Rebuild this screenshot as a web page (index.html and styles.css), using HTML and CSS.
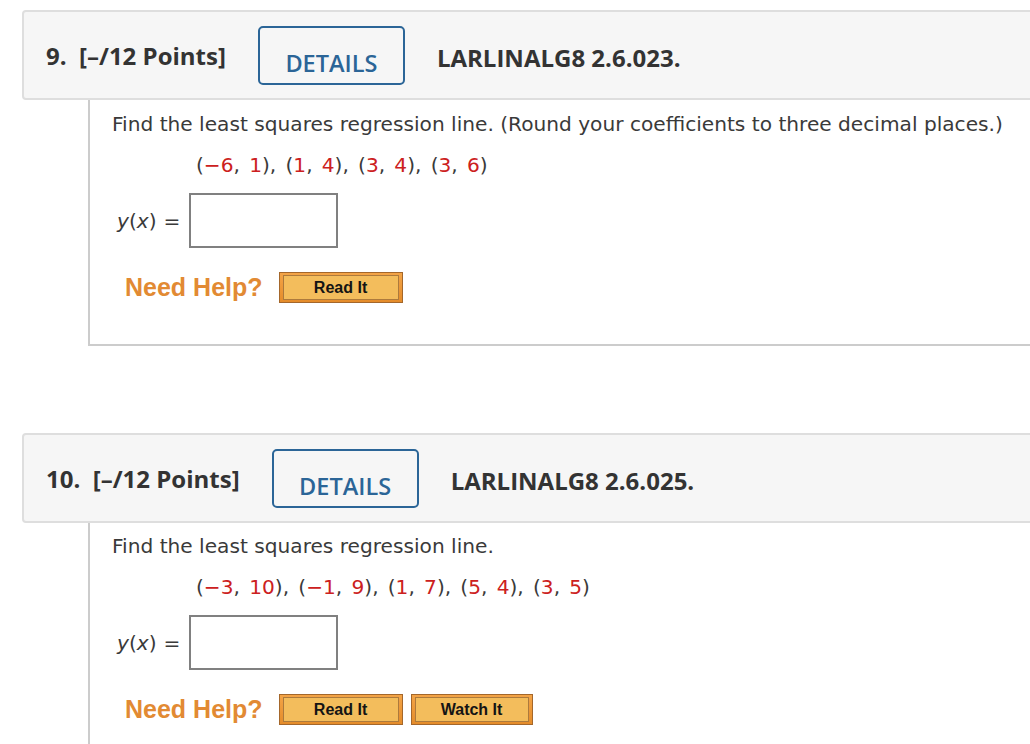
FILE: index.html
```html
<!DOCTYPE html>
<html lang="en">
<head>
<meta charset="utf-8">
<title>Questions</title>
<link rel="stylesheet" href="styles.css">
</head>
<body>
<div class="page">
  <section class="question q9">
    <header class="qhead">
      <span class="qnum">9.&nbsp; [–/12 Points]</span>
      <span class="details"><span>DETAILS</span></span>
      <span class="ref">LARLINALG8 2.6.023.</span>
    </header>
    <div class="qbody">
      <p class="prompt">Find the least squares regression line. (Round your coefficients to three decimal places.)</p>
      <p class="points">(<b>−6</b>, <b>1</b>), (<b>1</b>, <b>4</b>), (<b>3</b>, <b>4</b>), (<b>3</b>, <b>6</b>)</p>
      <div class="answer"><span class="lhs"><i>y</i>(<i>x</i>)</span><span class="eq">=</span><span class="input"></span></div>
      <div class="help">
        <span class="need">Need Help?</span>
        <span class="btn"><span class="btn-in read">Read It</span></span>
      </div>
    </div>
  </section>
  <section class="question q10">
    <header class="qhead">
      <span class="qnum">10.&nbsp; [–/12 Points]</span>
      <span class="details"><span>DETAILS</span></span>
      <span class="ref">LARLINALG8 2.6.025.</span>
    </header>
    <div class="qbody">
      <p class="prompt">Find the least squares regression line.</p>
      <p class="points">(<b>−3</b>, <b>10</b>), (<b>−1</b>, <b>9</b>), (<b>1</b>, <b>7</b>), (<b>5</b>, <b>4</b>), (<b>3</b>, <b>5</b>)</p>
      <div class="answer"><span class="lhs"><i>y</i>(<i>x</i>)</span><span class="eq">=</span><span class="input"></span></div>
      <div class="help">
        <span class="need">Need Help?</span>
        <span class="btn"><span class="btn-in read">Read It</span></span>
        <span class="btn"><span class="btn-in watch">Watch It</span></span>
      </div>
    </div>
  </section>
</div>
</body>
</html>
```
FILE: styles.css
```css
html, body {
  margin: 0;
  padding: 0;
  background: #fff;
}
.page {
  width: 1030px;
  height: 744px;
  overflow: hidden;
  padding: 10px 0 0 22px;
  box-sizing: border-box;
}
.question {
  margin-right: -20px;
}
.q9 {
  margin-bottom: 87px;
}
.qhead {
  display: flex;
  align-items: center;
  gap: 32px;
  height: 90px;
  box-sizing: border-box;
  border: 2px solid #dedede;
  border-radius: 4px;
  background: #f6f6f6;
  padding-left: 22px;
  font-family: "Open Sans", sans-serif;
  font-weight: 700;
  font-size: 24px;
  color: #333;
}
.qnum {
  white-space: pre;
}
.ref {
  padding-top: 4px;
}
.details {
  display: flex;
  align-items: center;
  justify-content: center;
  width: 147px;
  height: 59px;
  box-sizing: border-box;
  border: 2px solid #2b6597;
  border-radius: 5px;
  color: #2b6597;
  font-weight: 600;
  font-size: 23.5px;
  padding-top: 16px;
}
.qbody {
  margin-left: 66px;
  border-left: 2px solid #cccccc;
  border-bottom: 2px solid #cccccc;
  padding: 12px 0 41px 22px;
  font-family: "DejaVu Sans", Verdana, sans-serif;
  font-size: 20.15px;
  color: #3a3a3a;
}
.q10 .qbody {
  padding-top: 11px;
}
.prompt {
  margin: 0;
  line-height: 24px;
}
.points {
  margin: 17px 0 0 84px;
  line-height: 24px;
  word-spacing: 2.8px;
}
.points b {
  font-weight: normal;
  color: #cc2020;
}
.answer {
  display: flex;
  align-items: center;
  margin-top: 16px;
  padding-left: 5px;
}
.lhs i {
  font-style: oblique;
}
.eq {
  margin-left: 7px;
  margin-right: 9px;
}
.input {
  width: 149px;
  height: 55px;
  box-sizing: border-box;
  border: 2px solid #808080;
  background: #fff;
}
.help {
  display: flex;
  align-items: center;
  margin-top: 24px;
  padding-left: 13px;
}
.need {
  font-family: "Liberation Sans", Arial, sans-serif;
  font-weight: 700;
  font-size: 25px;
  color: #e28a33;
  margin-right: 16px;
}
.btn {
  display: inline-flex;
  box-sizing: border-box;
  height: 31px;
  border: 1px solid #a4672b;
  background: linear-gradient(#f3a447, #e58c2a);
  padding: 2px 3px;
  margin-right: 8px;
}
.btn-in {
  display: flex;
  align-items: center;
  justify-content: center;
  box-sizing: border-box;
  height: 100%;
  border: 1px solid #ad7a3c;
  background: #f3bd5c;
  font-family: "Liberation Sans", Arial, sans-serif;
  font-weight: 700;
  font-size: 16px;
  color: #141414;
}
.btn-in.read {
  width: 116px;
}
.btn-in.watch {
  width: 114px;
}
```
